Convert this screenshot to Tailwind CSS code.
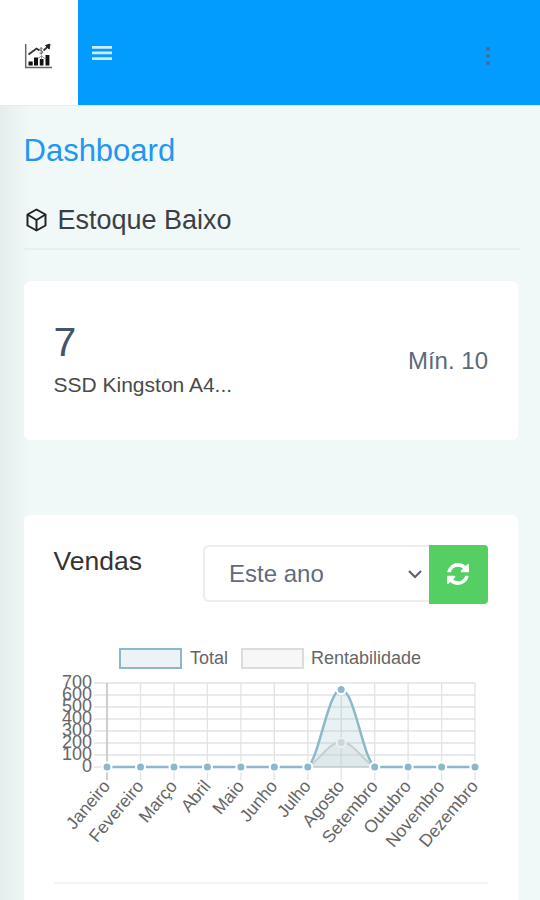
<!DOCTYPE html>
<html lang="pt-BR">
<head>
    <meta charset="UTF-8">
    <meta name="viewport" content="width=device-width, initial-scale=1.0">
    <title>Dashboard</title>
    <!-- Tailwind CSS for styling -->
    <script src="https://cdn.jsdelivr.net/npm/@tailwindcss/browser@4"></script>
</head>
<body class="h-[900px] overflow-hidden bg-[#f0f9f8] font-['Liberation_Sans',Arial,sans-serif] text-[#3b4045]">
    <!-- Top bar -->
    <header class="flex h-[105px] bg-[#019cfd]">
        <a href="#" class="flex w-[78px] items-center justify-center bg-white pt-2 pr-0.5" aria-label="Logo">
            <svg class="h-7 w-7" viewBox="0 0 28 28" fill="none" stroke="#222">
                <path d="M1.700 1v23.500H28" stroke="#666" stroke-width="1.500"/>
                <path d="M4.500 11.500l8-6 3 2M19.500 7.500l4.500-4" stroke="#333" stroke-width="1.800"/>
                <path d="M21.500 2.500l4.500-1.500-.8 5z" fill="#222"/>
                <path d="M18.500 5.500c-1-1-3-.5-2.700 1s3 1 3 2.600-2.300 1.700-3.200.7M17.200 4.500v7" stroke="#666" stroke-width="1"/>
                <path d="M4.500 18.500h4.200v4h-4.200zM10 14.500h4v8h-4zM15.800 16h3.700v6.500h-3.700zM21.500 12h3.900v10.500h-3.900z" fill="#111" stroke="none"/>
                <path d="M17.500 12.500v4M14 15.500l3.500-2.500 3.500 2.500" stroke="#777" stroke-width=".8"/>
            </svg>
        </a>
        <div class="flex flex-1 items-center justify-between pr-[50px] pl-[14px]">
            <button type="button" class="pt-px" aria-label="Menu">
                <svg class="h-[14px] w-5" viewBox="0 0 20 14" fill="#cfeafc">
                    <path d="M0 0h20v2.700H0zM0 5.600h20v2.700H0zM0 11.200h20v2.700H0z"/>
                </svg>
            </button>
            <button type="button" class="flex flex-col gap-[3px] pt-[7px]" aria-label="Mais">
                <span class="h-1 w-1 rounded-full bg-[#4d6a94]"></span>
                <span class="h-1 w-1 rounded-full bg-[#4d6a94]"></span>
                <span class="h-1 w-1 rounded-full bg-[#4d6a94]"></span>
            </button>
        </div>
    </header>

    <main class="h-[795px] border-t border-[#dcecf8] bg-linear-to-r from-[#e6eeed] to-[#f0f9f8] to-[30px] pr-[22px] pl-[23.5px]">
        <h1 class="pt-[26px] text-[31px] leading-[38px] text-[#2196f3]">Dashboard</h1>

        <!-- Low stock -->
        <h2 class="mt-[33px] -mr-0.5 flex h-[47px] items-start gap-[10px] border-b-2 border-[#e6eeee] text-[27px] leading-[34px]">
            <svg class="mt-[5px] h-6 w-6" viewBox="0 0 24 24" fill="none" stroke="#222" stroke-width="2" stroke-linejoin="round">
                <path d="M12.500 1.500l9 5v11l-9 5-9-5v-11z"/>
                <path d="M3.500 6.500l9 5.500 9-5.500M12.500 12v10.500"/>
            </svg>
            Estoque Baixo
        </h2>

        <section class="mt-[31px] flex h-[159px] items-center justify-between rounded-md bg-white px-[30px]">
            <div class="pb-[3px]">
                <div class="text-[41px] leading-[46px] text-[#44546a]">7</div>
                <div class="mt-1.5 text-[21px] leading-[28px] text-[#4a4a4a]">SSD Kingston A4...</div>
            </div>
            <div class="text-[24px] text-[#5b6979]">Mín. 10</div>
        </section>

        <!-- Sales -->
        <section class="mt-[75px] h-[420px] rounded-t-md bg-white px-[30px] pt-[30px]">
            <div class="flex justify-between">
                <h2 class="text-[26.5px] leading-[32px] text-[#333]">Vendas</h2>
                <div class="flex h-[59px]">
                    <div class="flex h-[57px] w-[226px] items-center justify-between rounded-l-md border-2 border-r-0 border-[#ededef] pr-[6px] pl-6 text-[24px] text-[#626b7d]">
                        Este ano
                        <svg class="h-4 w-4" viewBox="0 0 16 16" fill="none" stroke="#59616e" stroke-width="2">
                            <path d="M2 5l6 6 6-6"/>
                        </svg>
                    </div>
                    <button type="button" class="flex w-[59px] items-center justify-center rounded-r-[4px] bg-[#55ce63] pr-0.5 pb-0.5" aria-label="Atualizar">
                        <svg class="h-[22px] w-[22px]" viewBox="0 0 1536 1536" fill="#fff">
                            <path d="M1511 928q0 5-1 7-64 268-268 434.500t-478 166.500q-146 0-282.500-55t-243.500-157l-129 129q-19 19-45 19t-45-19-19-45v-448q0-26 19-45t45-19h448q26 0 45 19t19 45-19 45l-137 137q71 66 161 102t187 36q134 0 250-65t186-179q11-17 53-117 8-23 30-23h192q13 0 22.500 9.500t9.500 22.500zm25-800v448q0 26-19 45t-45 19h-448q-26 0-45-19t-19-45 19-45l138-138q-148-137-349-137-134 0-250 65t-186 179q-11 17-53 117-8 23-30 23h-199q-13 0-22.500-9.500t-9.500-22.500v-7q65-268 270-434.500t480-166.500q146 0 284 55.500t245 156.500l130-129q19-19 45-19t45 19 19 45z"/>
                        </svg>
                    </button>
                </div>
            </div>

            <!-- Sales chart: 33.45px per month, 12px per 100 units -->
            <svg class="mt-[36px] block h-[220px] w-[436px]" viewBox="54 640 436 220">
                <g stroke-width="2">
                    <rect x="120" y="649" width="61" height="19" fill="#ebf3f7" stroke="#8db8ca"/>
                    <rect x="242" y="649" width="61" height="19" fill="#f7f7f7" stroke="#dcdcdc"/>
                </g>
                <g fill="#666" font-size="18">
                    <text x="190" y="663.500">Total</text>
                    <text x="311" y="663.500">Rentabilidade</text>
                </g>
                <path d="M94 683H475M94 695H475M94 707H475M94 719H475M94 731H475M94 743H475M94 755H475M94 767H475M140.500 683V780M174 683V780M207.400 683V780M240.900 683V780M274.300 683V780M307.800 683V780M341.200 683V780M374.700 683V780M408.100 683V780M441.600 683V780M475 683V780" stroke="#e3e3e3" stroke-width="1.300"/>
                <path d="M107 683V780" stroke="#b5b5b5" stroke-width="1.300"/>
                <g fill="#666" font-size="18" text-anchor="end">
                    <text x="92" y="688">700</text>
                    <text x="92" y="700">600</text>
                    <text x="92" y="712">500</text>
                    <text x="92" y="724">400</text>
                    <text x="92" y="736">300</text>
                    <text x="92" y="748">200</text>
                    <text x="92" y="760">100</text>
                    <text x="92" y="772">0</text>
                </g>
                <!-- Rentabilidade -->
                <path d="M307.800 767C321 759 329 742 341.200 742S361 759 374.700 767z" fill="#dcdcdc" fill-opacity=".3" stroke="#d3d5d6" stroke-width="2"/>
                <circle cx="341.200" cy="742.500" r="4.500" fill="#dcdcdc" stroke="#fff" stroke-width="2"/>
                <!-- Total -->
                <path d="M307.800 767C320 756 328 689.500 341.200 689.500S362 756 374.700 767z" fill="#8db8ca" fill-opacity=".2"/>
                <path d="M107 767H307.800C320 756 328 689.500 341.200 689.500S362 756 374.700 767H475" fill="none" stroke="#8db8ca" stroke-width="2.500"/>
                <g fill="#8db8ca" stroke="#fff" stroke-width="2">
                    <circle cx="107" cy="767" r="4.500"/>
                    <circle cx="140.500" cy="767" r="4.500"/>
                    <circle cx="174" cy="767" r="4.500"/>
                    <circle cx="207.400" cy="767" r="4.500"/>
                    <circle cx="240.900" cy="767" r="4.500"/>
                    <circle cx="274.300" cy="767" r="4.500"/>
                    <circle cx="307.800" cy="767" r="4.500"/>
                    <circle cx="341.200" cy="689.500" r="4.500"/>
                    <circle cx="374.700" cy="767" r="4.500"/>
                    <circle cx="408.100" cy="767" r="4.500"/>
                    <circle cx="441.600" cy="767" r="4.500"/>
                    <circle cx="475" cy="767" r="4.500"/>
                </g>
                <g fill="#666" font-size="17.500" text-anchor="end">
                    <text transform="translate(111 786.500) rotate(-50)">Janeiro</text>
                    <text transform="translate(144.500 786.500) rotate(-50)">Fevereiro</text>
                    <text transform="translate(178 786.500) rotate(-50)">Março</text>
                    <text transform="translate(211.400 786.500) rotate(-50)">Abril</text>
                    <text transform="translate(244.900 786.500) rotate(-50)">Maio</text>
                    <text transform="translate(278.300 786.500) rotate(-50)">Junho</text>
                    <text transform="translate(311.800 786.500) rotate(-50)">Julho</text>
                    <text transform="translate(345.200 786.500) rotate(-50)">Agosto</text>
                    <text transform="translate(378.700 786.500) rotate(-50)">Setembro</text>
                    <text transform="translate(412.100 786.500) rotate(-50)">Outubro</text>
                    <text transform="translate(445.600 786.500) rotate(-50)">Novembro</text>
                    <text transform="translate(479 786.500) rotate(-50)">Dezembro</text>
                </g>
            </svg>
            <hr class="mt-[22px] border-t-2 border-[#f4f4f4]">
        </section>
    </main>
</body>
</html>
